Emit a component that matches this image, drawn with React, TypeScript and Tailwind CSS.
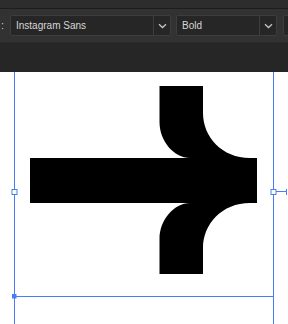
import React from "react";

function Chevron() {
  return (
    <svg width="9" height="6" viewBox="0 0 9 6" className="block">
      <path d="M1 1.2 L4.5 4.5 L8 1.2" fill="none" stroke="#c4c4c4" strokeWidth="1.3" />
    </svg>
  );
}

function Dropdown({ label, width, textWidth }: { label: string; width: string; textWidth: string }) {
  return (
    <div className={`flex h-[21px] shrink-0 rounded-[2px] border border-[#3d3d3d] bg-[#262626] ${width}`}>
      <div className={`flex shrink-0 items-center pl-[5px] text-[10px] text-[#d6d6d6] ${textWidth}`}>{label}</div>
      <div className="w-px shrink-0 bg-[#3d3d3d]" />
      <div className="flex flex-1 items-center justify-center">
        <Chevron />
      </div>
    </div>
  );
}

export default function App() {
  return (
    <div
      className="flex h-[324px] w-[288px] flex-col overflow-hidden bg-[#262626]"
      style={{ fontFamily: '"Liberation Sans", Arial, sans-serif' }}
    >
      <div className="h-[8px] shrink-0 bg-[#2d2d2d]" />
      <div className="h-px shrink-0 bg-[#1d1d1d]" />
      <div className="flex h-[33px] shrink-0 items-center bg-[#323232]">
        <span className="ml-[1px] w-[9px] shrink-0 text-[11px] text-[#c8c8c8]">:</span>
        <Dropdown label="Instagram Sans" width="w-[161px]" textWidth="w-[142px]" />
        <div className="w-[5px] shrink-0" />
        <Dropdown label="Bold" width="w-[101px]" textWidth="w-[82px]" />
        <div className="w-[6px] shrink-0" />
        <div className="h-[21px] w-[20px] shrink-0 rounded-[2px] border border-[#3d3d3d] bg-[#262626]" />
      </div>
      <div className="h-px shrink-0 bg-[#2a2a2a]" />
      <div className="h-[29px] shrink-0 bg-[#262626]" />
      <div className="relative flex-1 bg-white">
        <svg className="absolute inset-0" width="288" height="252" viewBox="0 72 288 252">
          <path
            d="M30,158 L190,158 C174,158 159.5,141 159.5,122 L159.5,86 L203,86 L203,113 C203,137 222,158 250,158 L257,158 L257,203 L250,203 C222,203 203,224 203,248 L203,274 L159.5,274 L159.5,239 C159.5,220 174,203 190,203 L30,203 Z"
            fill="#000"
          />
          <g stroke="#4a7cf7" strokeWidth="1" fill="none">
            <line x1="14.5" y1="72" x2="14.5" y2="324" />
            <line x1="273.5" y1="72" x2="273.5" y2="324" />
            <line x1="14" y1="296.5" x2="274" y2="296.5" />
            <line x1="276" y1="191.5" x2="287" y2="191.5" />
            <line x1="286.5" y1="189" x2="286.5" y2="195" />
            <rect x="12" y="189.5" width="5" height="5" fill="#fff" />
            <rect x="271" y="189.5" width="5" height="5" fill="#fff" />
          </g>
          <rect x="12" y="294" width="4.5" height="4.5" fill="#4a7cf7" />
        </svg>
      </div>
    </div>
  );
}
